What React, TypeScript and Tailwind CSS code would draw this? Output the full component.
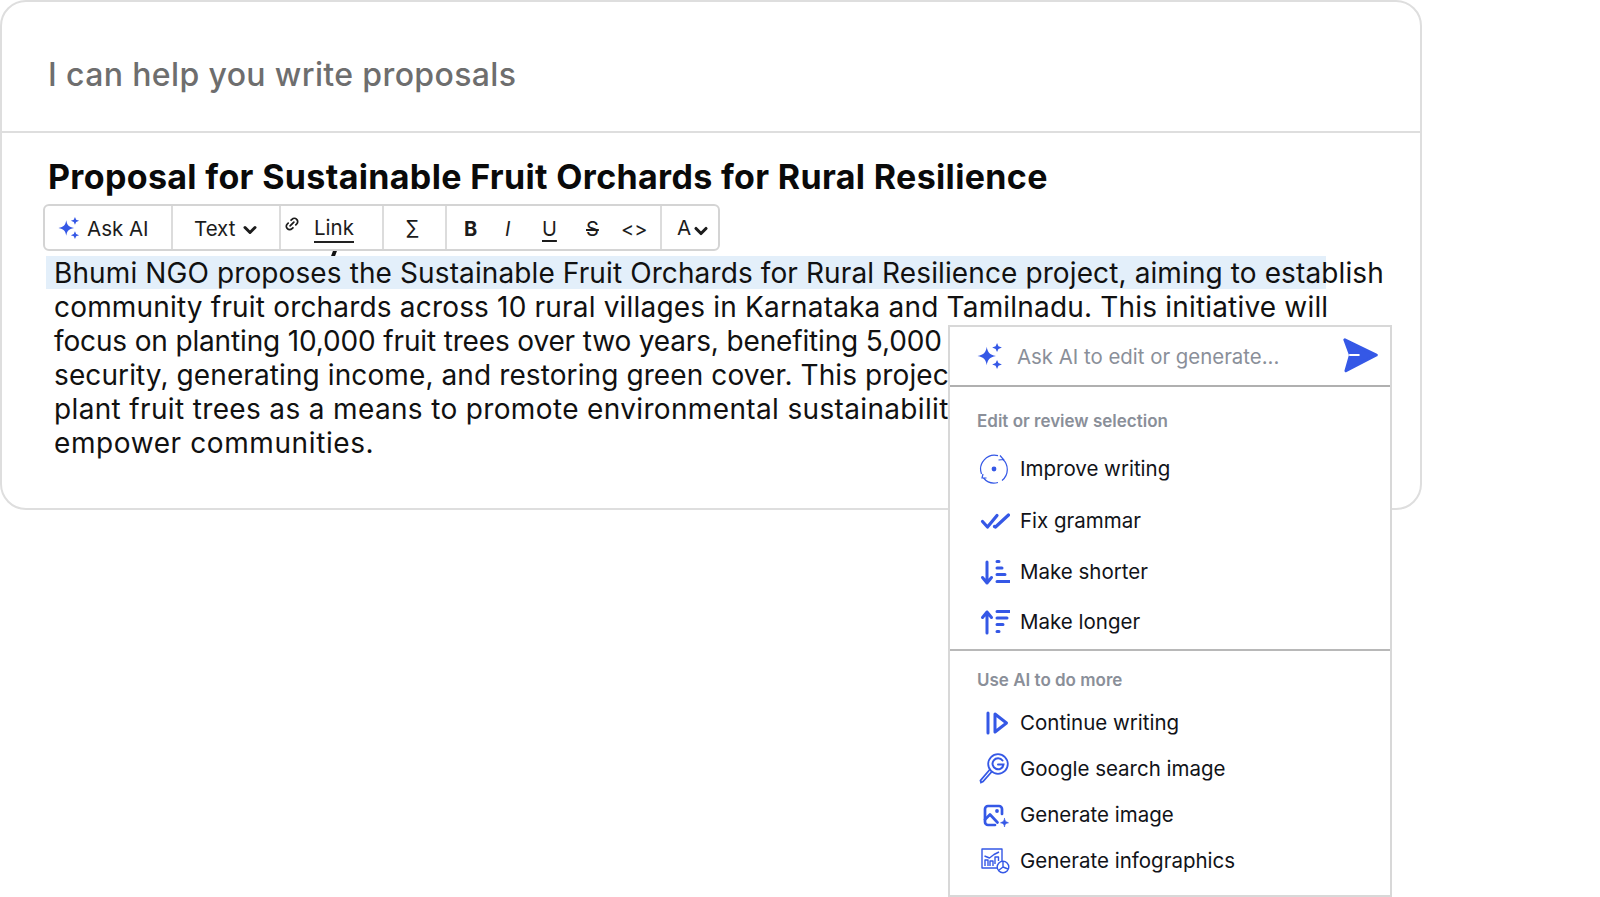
import { ReactNode } from "react";
import { ChevronDown, Link2 } from "lucide-react";

const BLUE = "#3558e6";

const Sparkles = ({ className }: { className: string }) => (
  <svg viewBox="0 0 24 24" className={className} fill={BLUE}>
    <path d="M9 3.5 C9.8 8.5 11.5 10.8 17.5 12 C11.5 13.2 9.8 15.5 9 20.5 C8.2 15.5 6.5 13.2 0.5 12 C6.5 10.8 8.2 8.5 9 3.5Z" />
    <path d="M18.5 0 L19.8 2.9 L23 4.2 L19.8 5.5 L18.5 8.4 L17.2 5.5 L14 4.2 L17.2 2.9Z" />
    <path d="M18.5 15.6 L19.8 18.5 L23 19.8 L19.8 21.1 L18.5 24 L17.2 21.1 L14 19.8 L17.2 18.5Z" />
  </svg>
);

const iconClass = "w-[32px] h-[32px]";

const ImproveIcon = () => (
  <svg viewBox="0 0 32 32" className={iconClass} fill="none" stroke={BLUE} strokeWidth="1.2">
    <path d="M24.5 6 A14 14 0 0 1 24 27.5 M20 29.5 A14 14 0 0 1 5.5 25 M3.5 21 A14 14 0 0 1 20 2.6" />
    <path d="M22 2.5 L25.5 6.5 L20.5 7" />
    <path d="M8.5 25 L4 25 L5 21" />
    <circle cx="16" cy="16" r="2.4" fill={BLUE} stroke="none" />
  </svg>
);

const CheckIcon = () => (
  <svg viewBox="0 0 32 32" className={iconClass} fill="none" stroke={BLUE} strokeWidth="3.2" strokeLinecap="round" strokeLinejoin="round">
    <path d="M4.5 16.5 L9.5 22 L19 10.5" />
    <path d="M16.5 21.5 L17.5 22 L30.5 10" />
  </svg>
);

const ShorterIcon = () => (
  <svg viewBox="0 0 32 32" className={iconClass} fill="none" stroke={BLUE} strokeWidth="3" strokeLinecap="round" strokeLinejoin="round">
    <path d="M9 6 V27 M4.5 21.5 L9 27 L13.5 21.5" />
    <path d="M19 5.5 H21 M19 12 H24 M19 18.5 H27 M19 25.5 H32" />
  </svg>
);

const LongerIcon = () => (
  <svg viewBox="0 0 32 32" className={iconClass} fill="none" stroke={BLUE} strokeWidth="3" strokeLinecap="round" strokeLinejoin="round">
    <path d="M9 27 V6 M4.5 11.5 L9 6 L13.5 11.5" />
    <path d="M19 5.5 H32 M19 12 H29 M19 18.5 H25 M19 25.5 H21" />
  </svg>
);

const ContinueIcon = () => (
  <svg viewBox="0 0 32 32" className={iconClass} fill="none" stroke={BLUE} strokeWidth="3" strokeLinejoin="round" strokeLinecap="round">
    <path d="M10 6 V26" />
    <path d="M17 7 L28.5 16 L17 25Z" />
  </svg>
);

const GoogleIcon = () => (
  <svg viewBox="0 0 32 32" className={iconClass} fill="none" stroke={BLUE} strokeWidth="1.8" strokeLinecap="round">
    <circle cx="20" cy="11" r="9.8" />
    <path d="M13.5 19 L5 28.5 L3 29.5 L2.5 27.5 L11 17.5" />
    <path d="M24.5 7.5 A5.5 5.5 0 1 0 25.5 11.5 H20" strokeWidth="2" />
  </svg>
);

const ImageIcon = () => (
  <svg viewBox="0 0 32 32" className={iconClass} fill="none" stroke={BLUE} strokeWidth="2.7" strokeLinecap="round" strokeLinejoin="round">
    <path d="M17 26 H10 A3 3 0 0 1 7 23 V10 A3 3 0 0 1 10 7 H21 A3 3 0 0 1 24 10 V15" />
    <path d="M7 20.5 L12 15.5 L19.5 23.5" />
    <circle cx="19" cy="12" r="1.9" fill={BLUE} stroke="none" />
    <path d="M26.5 19.5 C26.9 22 27.5 22.6 30.5 23.8 C27.5 24.6 26.9 25.2 26.5 28 C26.1 25.2 25.5 24.6 22.5 23.8 C25.5 22.6 26.1 22 26.5 19.5Z" fill={BLUE} strokeWidth="0.6" />
  </svg>
);

const InfographicIcon = () => (
  <svg viewBox="0 0 32 32" className={iconClass} fill="none" stroke={BLUE} strokeWidth="1.4" strokeLinejoin="round">
    <path d="M19 23 H4 V4 H24 V16" />
    <path d="M6.5 11 L11.5 13 L16 9.5 L21 7" />
    <path d="M7 21 V15 H10 V21 M12 21 V16 H15 V21 M17 19 V12 H20.5 V16" />
    <circle cx="25" cy="22" r="5.8" />
    <path d="M25 16.5 V22 L30 24 M25 22 L20.5 25.5" />
  </svg>
);

const Row = ({ icon, label, h }: { icon: ReactNode; label: string; h: string }) => (
  <div className={`flex items-center pl-[1px] ${h}`}>
    <div className="w-[32px] flex justify-center mr-[10px]">{icon}</div>
    <span className="text-[20.5px] text-[#111318]">{label}</span>
  </div>
);

const Cell = ({ w, children, className = "" }: { w: string; children: ReactNode; className?: string }) => (
  <div className={`${w} h-full flex items-center border-r-2 border-[#dcdcdc] last:border-r-0 ${className}`}>{children}</div>
);

const lines = [
  { text: "community fruit orchards across 10 rural villages in Karnataka and Tamilnadu. This initiative will", track: "tracking-[0.18px]" },
  { text: "focus on planting 10,000 fruit trees over two years, benefiting 5,000", track: "tracking-[-0.15px]" },
  { text: "security, generating income, and restoring green cover. This projec", track: "tracking-[0.1px]" },
  { text: "plant fruit trees as a means to promote environmental sustainabilit", track: "tracking-[0.35px]" },
  { text: "empower communities.", track: "tracking-[0.6px]" },
];

export default function App() {
  return (
    <div className="relative w-[1600px] h-[897px] overflow-hidden bg-white font-['Inter',sans-serif]">
      {/* Main card */}
      <div className="w-[1422px] h-[510px] border-2 border-[#dedede] rounded-[26px]">
        <div className="h-[131px] border-b-2 border-[#dedede] flex items-center pl-[46px] pt-[16px]">
          <h2 className="text-[32px] tracking-[0.37px] text-[#6e6e6e] font-medium">I can help you write proposals</h2>
        </div>
        <div className="pt-[22px]">
          <h1 className="pl-[46px] text-[34px] tracking-[0.34px] leading-[44px] font-bold text-[#0a0a0a] whitespace-nowrap">
            Proposal for Sustainable Fruit Orchards for Rural Resilience
          </h1>
          <div className="mt-[57px] text-[28px] leading-[34px] text-[#111] whitespace-nowrap">
            <div className="relative">
              <div className="absolute left-[44px] top-0 w-[1280px] h-[33px] bg-[#e3effa]" />
              <div className="relative pl-[52px] tracking-[0.11px]">Bhumi NGO proposes the Sustainable Fruit Orchards for Rural Resilience project, aiming to establish</div>
            </div>
            {lines.map((l) => (
              <div key={l.text} className={`pl-[52px] ${l.track}`}>{l.text}</div>
            ))}
          </div>
        </div>
      </div>

      {/* Floating toolbar */}
      <div className="absolute left-[43px] top-[204px] w-[677px] h-[47px] bg-white border-2 border-[#d4d4d4] rounded-[6px] flex items-center text-[20.5px] text-[#1c1c1c]">
        <Cell w="w-[128px]" className="pl-[13px] pt-[3px]">
          <Sparkles className="w-[22px] h-[22px] mr-[7px] -mt-[2px]" />
          <span>Ask AI</span>
        </Cell>
        <Cell w="w-[108px]" className="pl-[21px] pt-[3px]">
          <span>Text</span>
          <ChevronDown className="w-[20px] h-[20px] ml-[5px] mt-[2px]" strokeWidth={3.6} />
        </Cell>
        <Cell w="w-[103px]" className="pl-[3px] pt-[3px]">
          <Link2 className="w-[16px] h-[16px] -rotate-45 -mt-[10px] mr-[14px]" strokeWidth={2.6} />
          <span className="border-b-2 border-[#222] leading-[26px]">Link</span>
        </Cell>
        <Cell w="w-[63px]" className="pl-[22px] pt-[2px]">
          <span>∑</span>
        </Cell>
        <Cell w="w-[215px]" className="pl-[17px] pt-[2px] text-[20px]">
          <span className="font-bold w-[41px]">B</span>
          <span className="italic w-[37px]">I</span>
          <span className="underline underline-offset-4 w-[44px]">U</span>
          <span className="line-through w-[35px]">S</span>
          <span>&lt;&gt;</span>
        </Cell>
        <Cell w="w-[56px]" className="pl-[15px] pt-[2px]">
          <span>A</span>
          <ChevronDown className="w-[20px] h-[20px] mt-[5px]" strokeWidth={3.8} />
        </Cell>
      </div>
      <div className="absolute left-[332px] top-[251px] w-[4px] h-[5px] bg-[#111] skew-x-[-20deg]" />

      {/* AI panel */}
      <div className="absolute left-[948px] top-[325px] w-[444px] h-[572px] bg-white border-2 border-[#d8d8d8]">
        <div className="h-[60px] border-b-2 border-[#b0b0b0] flex items-center pl-[27px] pr-[12px]">
          <Sparkles className="w-[26px] h-[26px]" />
          <span className="ml-[14px] mt-[2px] text-[20.4px] text-[#8a8f99] flex-1">Ask AI to edit or generate...</span>
          <svg viewBox="0 0 32 32" className="w-[36px] h-[36px] -mt-[2px]">
            <path fill={BLUE} stroke={BLUE} strokeWidth="2.6" strokeLinejoin="round" d="M2.5 2.5 L30.5 16 L3.5 30 L7.5 16Z" />
            <path stroke="#ffffff" strokeWidth="1.6" strokeLinecap="round" d="M7 16 H15" />
          </svg>
        </div>
        <div className="h-[264px] border-b-2 border-[#b8b8b8] pl-[27px] pt-[23px]">
          <div className="text-[17px] font-semibold text-[#8a8f99] leading-[22px]">Edit or review selection</div>
          <div className="mt-[11px]">
            <Row icon={<ImproveIcon />} label="Improve writing" h="h-[52px]" />
            <Row icon={<CheckIcon />} label="Fix grammar" h="h-[52px]" />
            <Row icon={<ShorterIcon />} label="Make shorter" h="h-[50px]" />
            <Row icon={<LongerIcon />} label="Make longer" h="h-[50px]" />
          </div>
        </div>
        <div className="pl-[27px] pt-[18px]">
          <div className="text-[17px] font-semibold text-[#8a8f99] leading-[22px]">Use AI to do more</div>
          <div className="mt-[9px]">
            <Row icon={<ContinueIcon />} label="Continue writing" h="h-[46px]" />
            <Row icon={<GoogleIcon />} label="Google search image" h="h-[46px]" />
            <Row icon={<ImageIcon />} label="Generate image" h="h-[46px]" />
            <Row icon={<InfographicIcon />} label="Generate infographics" h="h-[46px]" />
          </div>
        </div>
      </div>
    </div>
  );
}
